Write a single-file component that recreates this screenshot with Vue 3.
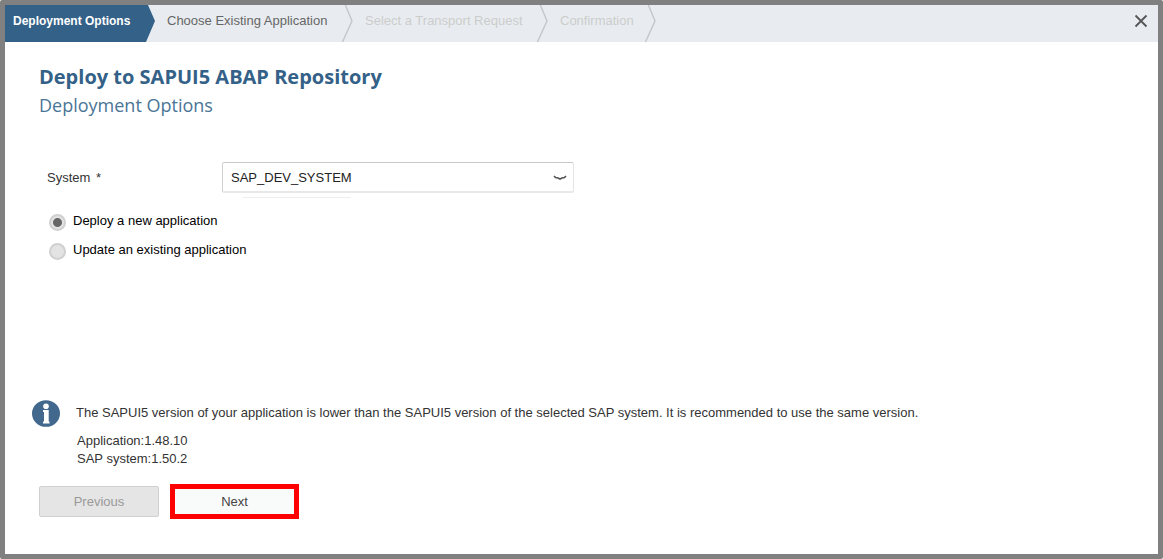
<script setup>
import { ref } from 'vue'

const steps = [
  { label: 'Deployment Options', state: 'current' },
  { label: 'Choose Existing Application', state: 'open' },
  { label: 'Select a Transport Request', state: 'locked' },
  { label: 'Confirmation', state: 'locked' },
]
const system = ref('SAP_DEV_SYSTEM')
const mode = ref('new')
</script>

<template>
  <div class="frame">
    <main class="dialog">
      <header class="bar">
        <ol class="steps">
          <li v-for="step in steps" :key="step.label" class="step" :class="step.state">
            <span>{{ step.label }}</span>
            <svg v-if="step.state !== 'current'" class="edge" viewBox="0 0 12 37" aria-hidden="true">
              <path d="M4 -1 L11 16 L1 38" fill="none" stroke="#c2c7cb" stroke-width="1.4" />
            </svg>
          </li>
        </ol>
        <button class="close" type="button" aria-label="Close">
          <svg viewBox="0 0 14 14" aria-hidden="true">
            <path d="M1.5 1.5 L12.5 12.5 M12.5 1.5 L1.5 12.5" fill="none" stroke="#555" stroke-width="1.8" />
          </svg>
        </button>
      </header>

      <div class="content">
        <h1>Deploy to SAPUI5 ABAP Repository</h1>
        <h2>Deployment Options</h2>

        <form class="form" @submit.prevent>
          <div class="field">
            <label for="system">System <span class="star">*</span></label>
            <div class="picker">
              <select id="system" v-model="system">
                <option>SAP_DEV_SYSTEM</option>
              </select>
              <svg class="arrow" viewBox="0 0 14 6" aria-hidden="true">
                <path d="M1 1 L2.500 2.500 L5 3 L7 4 L9 3 L11.500 2.500 L13 1" fill="none" stroke="#555" stroke-width="1.7" />
              </svg>
            </div>
          </div>
          <div class="rule"></div>
          <div class="choice">
            <input id="new" v-model="mode" type="radio" name="mode" value="new" />
            <label for="new">Deploy a new application</label>
          </div>
          <div class="choice">
            <input id="existing" v-model="mode" type="radio" name="mode" value="existing" />
            <label for="existing">Update an existing application</label>
          </div>
        </form>

        <section class="notice">
          <svg class="info" viewBox="0 0 28 27" aria-hidden="true">
            <ellipse cx="14" cy="13.5" rx="14" ry="13.3" fill="#42698d" />
            <circle cx="14" cy="6.2" r="2.8" fill="#fff" />
            <path d="M11 10 H16.7 V21.5 H17.5 V23.5 H11 V21.5 H12 V12 H11 Z" fill="#fff" />
          </svg>
          <div>
            <p class="message">The SAPUI5 version of your application is lower than the SAPUI5 version of the selected SAP system. It is recommended to use the same version.</p>
            <p class="version">Application:1.48.10</p>
            <p class="version">SAP system:1.50.2</p>
          </div>
        </section>

        <footer class="actions">
          <button class="previous" type="button" disabled>Previous</button>
          <button class="next" type="button">Next</button>
        </footer>
      </div>
    </main>
  </div>
</template>

<style>
body { background: #fff; }
</style>

<style scoped>
* { box-sizing: border-box; }
.frame {
  min-height: 100vh;
  display: flex;
  border: 5px solid #808080;
  border-radius: 2px;
  background: #fff;
  font-family: "Liberation Sans", Arial, sans-serif;
  font-size: 13px;
  line-height: 18px;
  color: #333;
}
.dialog { flex: 1; min-width: 0; }
.bar {
  display: flex;
  justify-content: space-between;
  height: 37px;
  background: #e8ecf0;
}
.steps {
  display: grid;
  grid-template-columns: 150px 198px 195px 108px;
  margin: 0;
  padding: 0;
  list-style: none;
}
.step {
  position: relative;
  padding: 7px 0 0 12px;
  white-space: nowrap;
  color: #666;
}
.step.current {
  padding-left: 8px;
  background: #346187;
  color: #fff;
  font-weight: bold;
  font-size: 12px;
  clip-path: polygon(0 0, calc(100% - 7px) 0, 100% 16px, calc(100% - 9px) 100%, 0 100%);
}
.step.locked { color: #ccc; }
.edge { position: absolute; top: 0; right: 0; width: 12px; height: 37px; }
.close {
  align-self: flex-start;
  margin: 9px 10px 0 0;
  padding: 0;
  width: 14px;
  height: 14px;
  border: 0;
  background: none;
}
.close svg { display: block; }
.content { padding: 21px 34px 0; }
h1, h2 {
  margin: 0;
  font-family: "Open Sans", "Noto Sans", sans-serif;
  line-height: 28px;
  color: #346187;
}
h1 { font-size: 20px; font-weight: 700; }
h2 { font-size: 18px; font-weight: 400; color: #4a7596; }
.form { margin-top: 43px; }
.field { display: flex; align-items: center; padding-left: 8px; }
.field label { width: 175px; }
.star { margin-left: 2px; }
.picker { position: relative; flex: 0 1 352px; }
select {
  appearance: none;
  display: block;
  width: 100%;
  height: 31px;
  padding: 1px 8px 0;
  border: 1px solid #e5e5e5;
  border-top-color: #c8c8c8;
  border-left-color: #d0d0d0;
  border-bottom: 2px solid #e8e8e8;
  border-radius: 2px;
  background: #fff;
  font: inherit;
  color: #222;
}
.arrow { position: absolute; right: 7px; top: 13px; width: 14px; height: 6px; pointer-events: none; }
.rule { width: 108px; height: 1px; margin: 4px 0 15px 204px; background: #eee; }
.choice { display: flex; align-items: center; gap: 7px; height: 18px; margin: 0 0 11px 10px; color: #000; }
.choice label { padding-bottom: 2px; }
.choice input {
  appearance: none;
  width: 17px;
  height: 17px;
  margin: 0;
  border: 2px solid #d0d0d0;
  border-radius: 50%;
  background: #e3e3e3;
}
.choice input:checked { background: radial-gradient(circle, #666 0 4px, #e3e3e3 5px); }
.notice { display: flex; gap: 16px; margin: 130px 0 0 -7px; }
.info { flex: none; width: 28px; height: 27px; margin-top: 10px; }
.notice p { margin: 0; }
.notice .message { margin: 14px 0 10px; }
.notice .version { padding-left: 1px; }
.actions { display: flex; align-items: center; gap: 11px; margin-top: 16px; }
.actions button { font: inherit; }
.previous {
  width: 120px;
  height: 31px;
  border: 1px solid #d0d0d0;
  border-radius: 2px;
  background: #e5e5e5;
  color: #999;
}
.next {
  width: 129px;
  height: 35px;
  border: 5px solid #f00;
  background: #f9fbfb;
  color: #444;
}
</style>
